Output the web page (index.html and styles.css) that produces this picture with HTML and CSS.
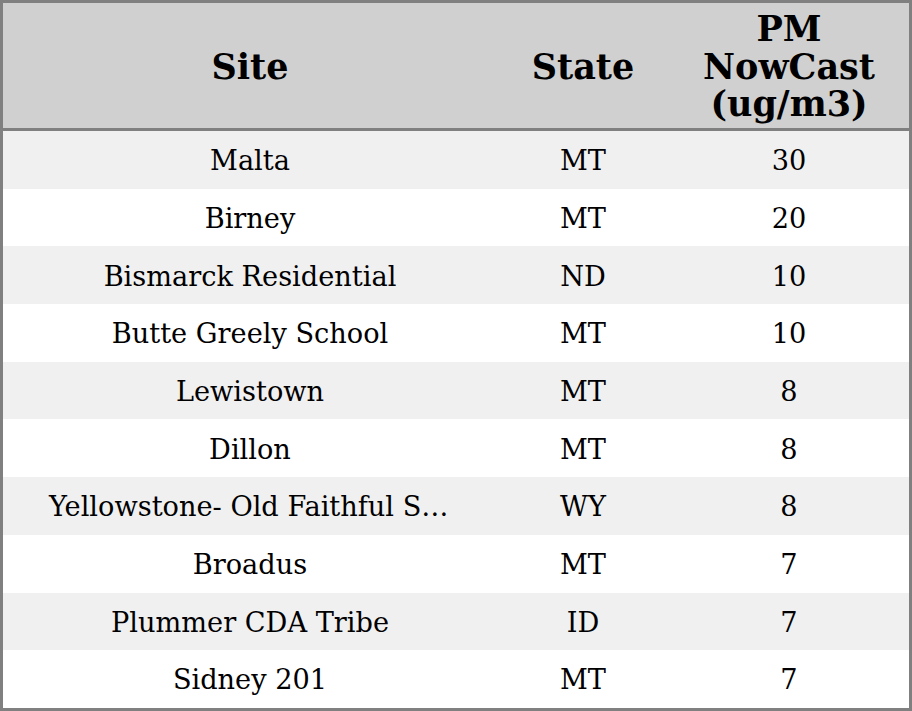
FILE: index.html
```html
<!DOCTYPE html>
<html>
<head>
<meta charset="utf-8">
<link rel="stylesheet" href="styles.css">
</head>
<body>
<div class="frame">
<table class="aq">
<colgroup><col class="c-site"><col class="c-state"><col class="c-pm"></colgroup>
<thead>
<tr><th>Site</th><th>State</th><th>PM<br>NowCast<br>(ug/m3)</th></tr>
</thead>
<tbody>
<tr><td class="site">Malta</td><td>MT</td><td>30</td></tr>
<tr><td class="site">Birney</td><td>MT</td><td>20</td></tr>
<tr><td class="site">Bismarck Residential</td><td>ND</td><td>10</td></tr>
<tr><td class="site">Butte Greely School</td><td>MT</td><td>10</td></tr>
<tr><td class="site">Lewistown</td><td>MT</td><td>8</td></tr>
<tr><td class="site">Dillon</td><td>MT</td><td>8</td></tr>
<tr><td class="site">Yellowstone- Old Faithful Snow Lodge</td><td>WY</td><td>8</td></tr>
<tr><td class="site">Broadus</td><td>MT</td><td>7</td></tr>
<tr><td class="site">Plummer CDA Tribe</td><td>ID</td><td>7</td></tr>
<tr><td class="site">Sidney 201</td><td>MT</td><td>7</td></tr>
</tbody>
</table>
</div>
</body>
</html>
```
FILE: styles.css
```css
html, body { margin: 0; padding: 0; background: #ffffff; }
.frame {
  width: 912px;
  height: 711px;
  box-sizing: border-box;
  border: 3px solid #808080;
  overflow: hidden;
}
.aq {
  width: 100%;
  table-layout: fixed;
  border-collapse: separate;
  border-spacing: 0;
  font-family: "DejaVu Serif", serif;
  color: #000;
}
.c-site { width: 494px; }
.c-state { width: 172px; }
.c-pm { width: 240px; }
.aq th {
  background: #d0d0d0;
  font-size: 35px;
  font-weight: bold;
  line-height: 37.5px;
  padding: 7px 2px 5.5px;
  border-bottom: 3px solid #808080;
  text-align: center;
  vertical-align: middle;
}
.aq td {
  font-size: 27.2px;
  line-height: 30px;
  padding: 15.2px 4px 12.5px;
  text-align: center;
  white-space: nowrap;
  overflow: hidden;
  text-overflow: ellipsis;
}
.aq td.site { padding-left: 46px; padding-right: 46px; }
.aq tbody tr:nth-child(odd) td { background: #f0f0f0; }
.aq tbody tr:nth-child(even) td { background: #ffffff; }
```
